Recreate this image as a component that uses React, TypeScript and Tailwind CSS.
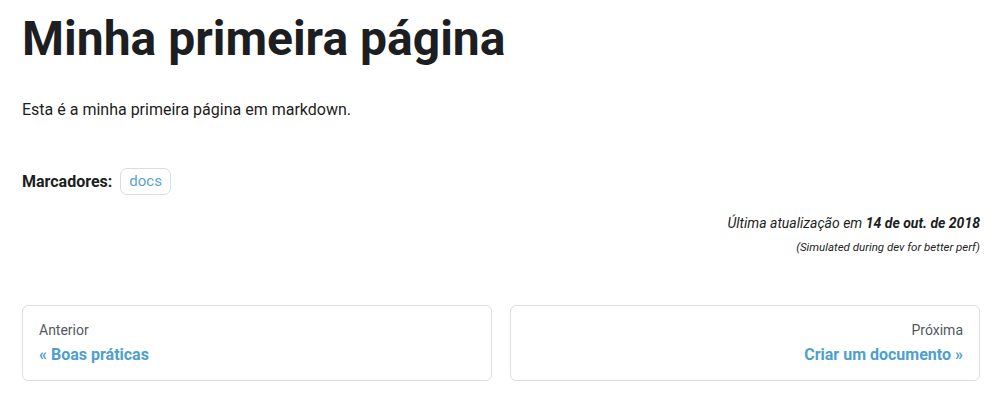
export default function App() {
  return (
    <div className="min-h-[402px] bg-white text-[#1c1e21]" style={{ fontFamily: 'Roboto, "Liberation Sans", sans-serif' }}>
      <div className="pl-[22px] pr-[26px] pt-[9px]">
        <h1 className="text-[48px] font-bold leading-[60px]">Minha primeira página</h1>
        <p className="mt-[29px] text-[16px] leading-[24px]">Esta é a minha primeira página em markdown.</p>

        <div className="mt-[46px] flex items-center gap-[8px]">
          <b className="text-[16px] font-bold">Marcadores:</b>
          <a href="#" className="rounded-[7px] border border-[#dadde1] px-[8px] py-[2px] text-[15px] leading-[21px] text-[#5aa3cc]">
            docs
          </a>
        </div>

        <div className="mt-[18px] flex flex-col items-end">
          <span className="text-[14px] italic leading-[21px]">
            Última atualização em <b>14 de out. de 2018</b>
          </span>
          <span className="mt-[5px] text-[11.5px] italic leading-[16px]">(Simulated during dev for better perf)</span>
        </div>

        <nav className="mt-[50px] grid grid-cols-2 gap-[18px]">
          <a href="#" className="flex h-[76px] flex-col justify-center rounded-[6px] border border-[#dadde1] px-[16px]">
            <span className="text-[14px] leading-[20px] text-[#525860]">Anterior</span>
            <span className="mt-[4px] text-[16px] font-bold leading-[22px] text-[#4e9fcd]">« Boas práticas</span>
          </a>
          <a href="#" className="flex h-[76px] flex-col items-end justify-center rounded-[6px] border border-[#dadde1] px-[16px]">
            <span className="text-[14px] leading-[20px] text-[#525860]">Próxima</span>
            <span className="mt-[4px] text-[16px] font-bold leading-[22px] text-[#4e9fcd]">Criar um documento »</span>
          </a>
        </nav>
      </div>
    </div>
  );
}
